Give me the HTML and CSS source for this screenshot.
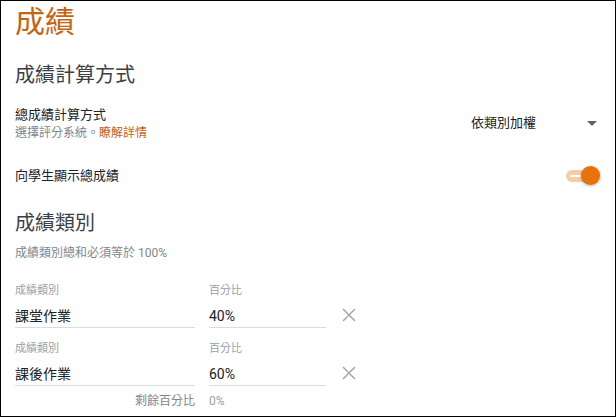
FILE: index.html
```html
<!DOCTYPE html>
<html lang="zh-Hant">
<head>
<meta charset="utf-8">
<link rel="stylesheet" href="styles.css">
</head>
<body>
<div class="page">
  <h1 class="title">成績</h1>
  <h2 class="section">成績計算方式</h2>

  <div class="setting calc">
    <div class="setting-text">
      <div class="setting-label">總成績計算方式</div>
      <div class="setting-sub">選擇評分系統。<a class="link">瞭解詳情</a></div>
    </div>
    <div class="select">
      <span class="select-value">依類別加權</span>
      <span class="select-arrow"></span>
    </div>
  </div>

  <div class="setting show">
    <div class="setting-label">向學生顯示總成績</div>
    <div class="toggle">
      <div class="toggle-track"><span class="toggle-dash"></span></div>
      <div class="toggle-knob"></div>
    </div>
  </div>

  <h2 class="section cat-title">成績類別</h2>
  <div class="hint">成績類別總和必須等於 100%</div>

  <div class="rows">
    <div class="row">
      <div class="field name">
        <div class="field-label">成績類別</div>
        <div class="field-input">課堂作業</div>
      </div>
      <div class="field pct">
        <div class="field-label">百分比</div>
        <div class="field-input">40%</div>
      </div>
      <svg class="remove" width="14" height="14" viewBox="0 0 14 14"><path d="M1 1L13 13M13 1L1 13" stroke="#a6a6a6" stroke-width="1.5" fill="none"/></svg>
    </div>
    <div class="row">
      <div class="field name">
        <div class="field-label">成績類別</div>
        <div class="field-input">課後作業</div>
      </div>
      <div class="field pct">
        <div class="field-label">百分比</div>
        <div class="field-input">60%</div>
      </div>
      <svg class="remove" width="14" height="14" viewBox="0 0 14 14"><path d="M1 1L13 13M13 1L1 13" stroke="#a6a6a6" stroke-width="1.5" fill="none"/></svg>
    </div>
    <div class="remain">
      <div class="remain-label">剩餘百分比</div>
      <div class="remain-value">0%</div>
    </div>
  </div>
</div>
</body>
</html>
```

FILE: styles.css
```css
html, body {
  margin: 0;
  padding: 0;
  background: #fff;
}
body {
  font-family: Roboto, "Noto Sans CJK TC", sans-serif;
  color: #202124;
}
.page {
  box-sizing: border-box;
  width: 616px;
  height: 417px;
  border: 1px solid #000;
  padding: 3px 15px 0 14px;
  overflow: hidden;
}
.title {
  margin: 0;
  font-size: 30px;
  line-height: 36px;
  font-weight: 400;
  color: #c5650f;
}
.section {
  margin: 23px 0 0;
  font-size: 20px;
  line-height: 24px;
  font-weight: 400;
  color: #3c4043;
}
.setting {
  display: flex;
  align-items: flex-start;
  justify-content: space-between;
}
.calc {
  margin-top: 19px;
}
.setting-label {
  font-size: 13px;
  line-height: 18px;
  color: #202124;
}
.setting-sub {
  margin-top: 1px;
  font-size: 12px;
  line-height: 16px;
  color: #80868b;
}
.link {
  color: #c5650f;
}
.select {
  width: 129px;
  display: flex;
  align-items: center;
  justify-content: space-between;
  margin-top: 8px;
}
.select-value {
  font-size: 13px;
  line-height: 18px;
  color: #202124;
}
.select-arrow {
  width: 0;
  height: 0;
  border-left: 5px solid transparent;
  border-right: 5px solid transparent;
  border-top: 5px solid #5f6368;
  margin-right: 3px;
}
.show {
  margin-top: 25px;
  align-items: center;
}
.toggle {
  position: relative;
  width: 34px;
  height: 20px;
}
.toggle-track {
  position: absolute;
  left: 0;
  top: 4px;
  width: 30px;
  height: 12px;
  border-radius: 6px;
  background: #f7cba3;
}
.toggle-dash {
  position: absolute;
  left: 4px;
  top: 5px;
  width: 11px;
  height: 2px;
  background: #fff;
}
.toggle-knob {
  position: absolute;
  right: 0;
  top: 0;
  width: 19px;
  height: 19px;
  border-radius: 50%;
  background: #e8710a;
  box-shadow: 0 1px 3px rgba(0, 0, 0, 0.3);
}
.cat-title {
  margin-top: 25px;
}
.hint {
  margin-top: 10px;
  font-size: 12px;
  line-height: 16px;
  color: #80868b;
}
.rows {
  margin-top: 23px;
}
.row {
  display: flex;
  align-items: flex-start;
  gap: 14px;
  height: 58px;
}
.field-label {
  font-size: 11px;
  line-height: 14px;
  color: #9aa0a6;
}
.field-input {
  margin-top: 8px;
  font-size: 14px;
  line-height: 20px;
  padding-bottom: 1px;
  border-bottom: 1px solid #dadce0;
  color: #202124;
}
.name {
  width: 180px;
}
.pct {
  width: 117px;
}
.remove {
  margin: 24px 0 0 2px;
}
.remain {
  display: flex;
  gap: 14px;
  margin-top: -7px;
  font-size: 12px;
  line-height: 16px;
}
.remain-label {
  width: 180px;
  text-align: right;
  color: #80868b;
}
.remain-value {
  color: #9aa0a6;
}
```
